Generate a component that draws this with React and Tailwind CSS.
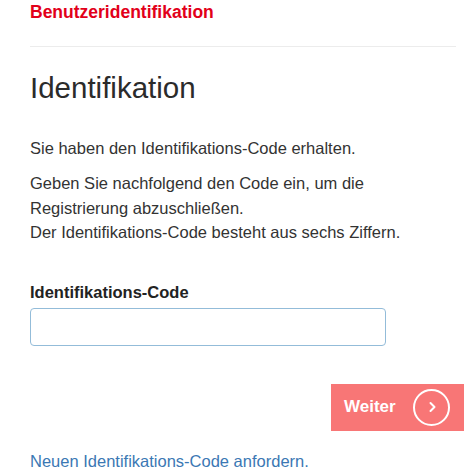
export default function App() {
  return (
    <div className="w-[474px] h-[474px] overflow-hidden bg-white font-['Liberation_Sans',Arial,sans-serif] text-[#333]">
      <div className="pl-[30px] pr-[10px]">
        <div className="h-[24px] flex items-center text-[17.5px] font-bold text-[#e2001a]">
          Benutzeridentifikation
        </div>
        <div className="mt-[22px] mr-[8px] border-t border-[#ececec]" />
        <h1 className="mt-[24px] text-[29.5px] leading-[34px] text-[#2b2b2b]">Identifikation</h1>
        <p className="mt-[31px] text-[16.5px] leading-[24px]">Sie haben den Identifikations-Code erhalten.</p>
        <p className="mt-[11px] text-[16.5px] leading-[24.5px]">
          Geben Sie nachfolgend den Code ein, um die
          <br />
          Registrierung abzuschließen.
          <br />
          Der Identifikations-Code besteht aus sechs Ziffern.
        </p>
        <label className="block mt-[35px] text-[16.5px] leading-[24px] font-bold text-[#222]">Identifikations-Code</label>
        <input
          type="text"
          className="mt-[4px] block w-[356px] h-[38px] rounded-[4px] border border-[#93bcd9] outline-none px-2"
        />
        <div className="mt-[38px] flex justify-end">
          <button className="w-[133px] h-[47px] bg-[#f87676] flex items-center justify-between pl-[13px] pr-[14px] text-white">
            <span className="text-[17px] font-bold">Weiter</span>
            <span className="w-[37px] h-[37px] rounded-full border-2 border-white flex items-center justify-center">
              <svg width="16" height="16" viewBox="0 0 16 16" fill="none">
                <path d="M6.5 4 10.5 8l-4 4" stroke="white" strokeWidth="2" strokeLinecap="round" strokeLinejoin="round" />
              </svg>
            </span>
          </button>
        </div>
        <a className="block mt-[18px] text-[16.5px] leading-[24px] text-[#3b78b4]">Neuen Identifikations-Code anfordern.</a>
      </div>
    </div>
  );
}
